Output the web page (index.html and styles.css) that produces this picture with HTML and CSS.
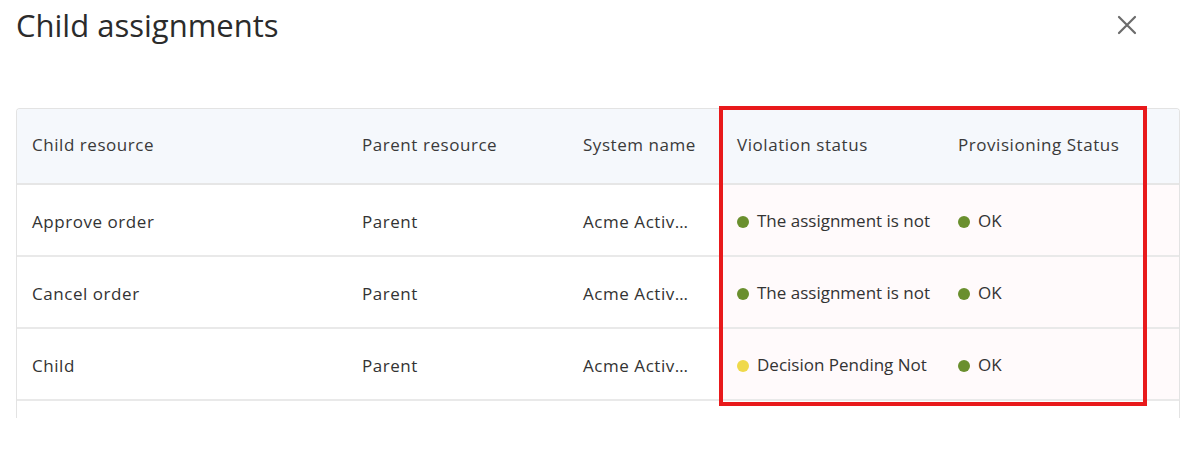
FILE: index.html
```html
<!DOCTYPE html>
<html lang="en">
<head>
<meta charset="utf-8">
<title>Child assignments</title>
<link rel="stylesheet" href="styles.css">
</head>
<body>
<div class="dialog">
  <div class="dialog-header">
    <h1 class="title">Child assignments</h1>
    <button class="close" aria-label="Close">
      <svg width="20" height="20" viewBox="0 0 20 20"><path d="M2 2 L18 18 M18 2 L2 18" stroke="#6b6b6b" stroke-width="2.2" stroke-linecap="round" fill="none"/></svg>
    </button>
  </div>
  <div class="table-area">
    <div class="table-wrap">
      <table class="grid">
        <colgroup>
          <col class="c1"><col class="c2"><col class="c3"><col class="c4"><col class="c5">
        </colgroup>
        <thead>
          <tr>
            <th>Child resource</th>
            <th>Parent resource</th>
            <th>System name</th>
            <th>Violation status</th>
            <th>Provisioning Status</th>
          </tr>
        </thead>
        <tbody>
          <tr>
            <td>Approve order</td>
            <td>Parent</td>
            <td>Acme Activ…</td>
            <td class="hl"><span class="status"><span class="dot green"></span>The assignment is not</span></td>
            <td class="hl"><span class="status"><span class="dot green"></span>OK</span></td>
          </tr>
          <tr>
            <td>Cancel order</td>
            <td>Parent</td>
            <td>Acme Activ…</td>
            <td class="hl"><span class="status"><span class="dot green"></span>The assignment is not</span></td>
            <td class="hl"><span class="status"><span class="dot green"></span>OK</span></td>
          </tr>
          <tr>
            <td>Child</td>
            <td>Parent</td>
            <td>Acme Activ…</td>
            <td class="hl"><span class="status"><span class="dot yellow"></span>Decision Pending Not</span></td>
            <td class="hl"><span class="status"><span class="dot green"></span>OK</span></td>
          </tr>
          <tr>
            <td></td><td></td><td></td><td></td><td></td>
          </tr>
        </tbody>
      </table>
    </div>
    <div class="highlight"></div>
  </div>
</div>
</body>
</html>
```
FILE: styles.css
```css
* { box-sizing: border-box; }
html, body { margin: 0; padding: 0; background: #ffffff; }
body {
  font-family: "Open Sans", "Liberation Sans", sans-serif;
  color: #333333;
  width: 1196px;
  height: 468px;
  overflow: hidden;
}
.dialog { padding: 0 16px; }
.dialog-header {
  display: flex;
  align-items: flex-start;
  justify-content: space-between;
  height: 108px;
}
.title {
  margin: 0;
  padding-top: 3px;
  font-size: 31px;
  font-weight: 400;
  line-height: 44px;
  color: #2b2b2b;
  letter-spacing: 0;
}
.close {
  border: 0;
  background: transparent;
  padding: 0;
  margin: 15px 43px 0 0;
  width: 20px;
  height: 20px;
  display: block;
}
.close svg { display: block; }
.table-area { position: relative; }
.table-wrap {
  height: 310px;
  overflow: hidden;
  border: 1px solid #e3e3e3;
  border-bottom: 0;
  border-radius: 4px 4px 0 0;
}
.grid {
  width: 100%;
  border-collapse: collapse;
  table-layout: fixed;
  font-size: 17px;
}
.c1 { width: 330px; }
.c2 { width: 221px; }
.c3 { width: 154px; }
.c4 { width: 221px; }
.c5 { width: auto; }
.grid th {
  background: #f5f8fc;
  height: 75px;
  text-align: left;
  font-weight: 400;
  color: #3a3a3a;
  padding: 0 15px 3px;
  letter-spacing: 0.55px;
  border-bottom: 2px solid #e6e6e6;
  white-space: nowrap;
}
.grid td {
  height: 72px;
  padding: 2px 15px 0;
  border-bottom: 2px solid #e9e9e9;
  white-space: nowrap;
  overflow: hidden;
  color: #333333;
  letter-spacing: 0.55px;
}
.grid td.hl { background: #fffafb; letter-spacing: 0; }
.status { display: inline-flex; align-items: center; gap: 8px; }
.dot {
  width: 12px; height: 12px; border-radius: 50%;
  display: inline-block; flex: none;
  margin-top: 3px;
}
.dot.green { background: #6a8f2e; }
.dot.yellow { background: #efd94a; }
.highlight {
  position: absolute;
  left: 703px;
  top: -2px;
  width: 428px;
  height: 300px;
  border: 4px solid #e8191b;
  pointer-events: none;
}
```
